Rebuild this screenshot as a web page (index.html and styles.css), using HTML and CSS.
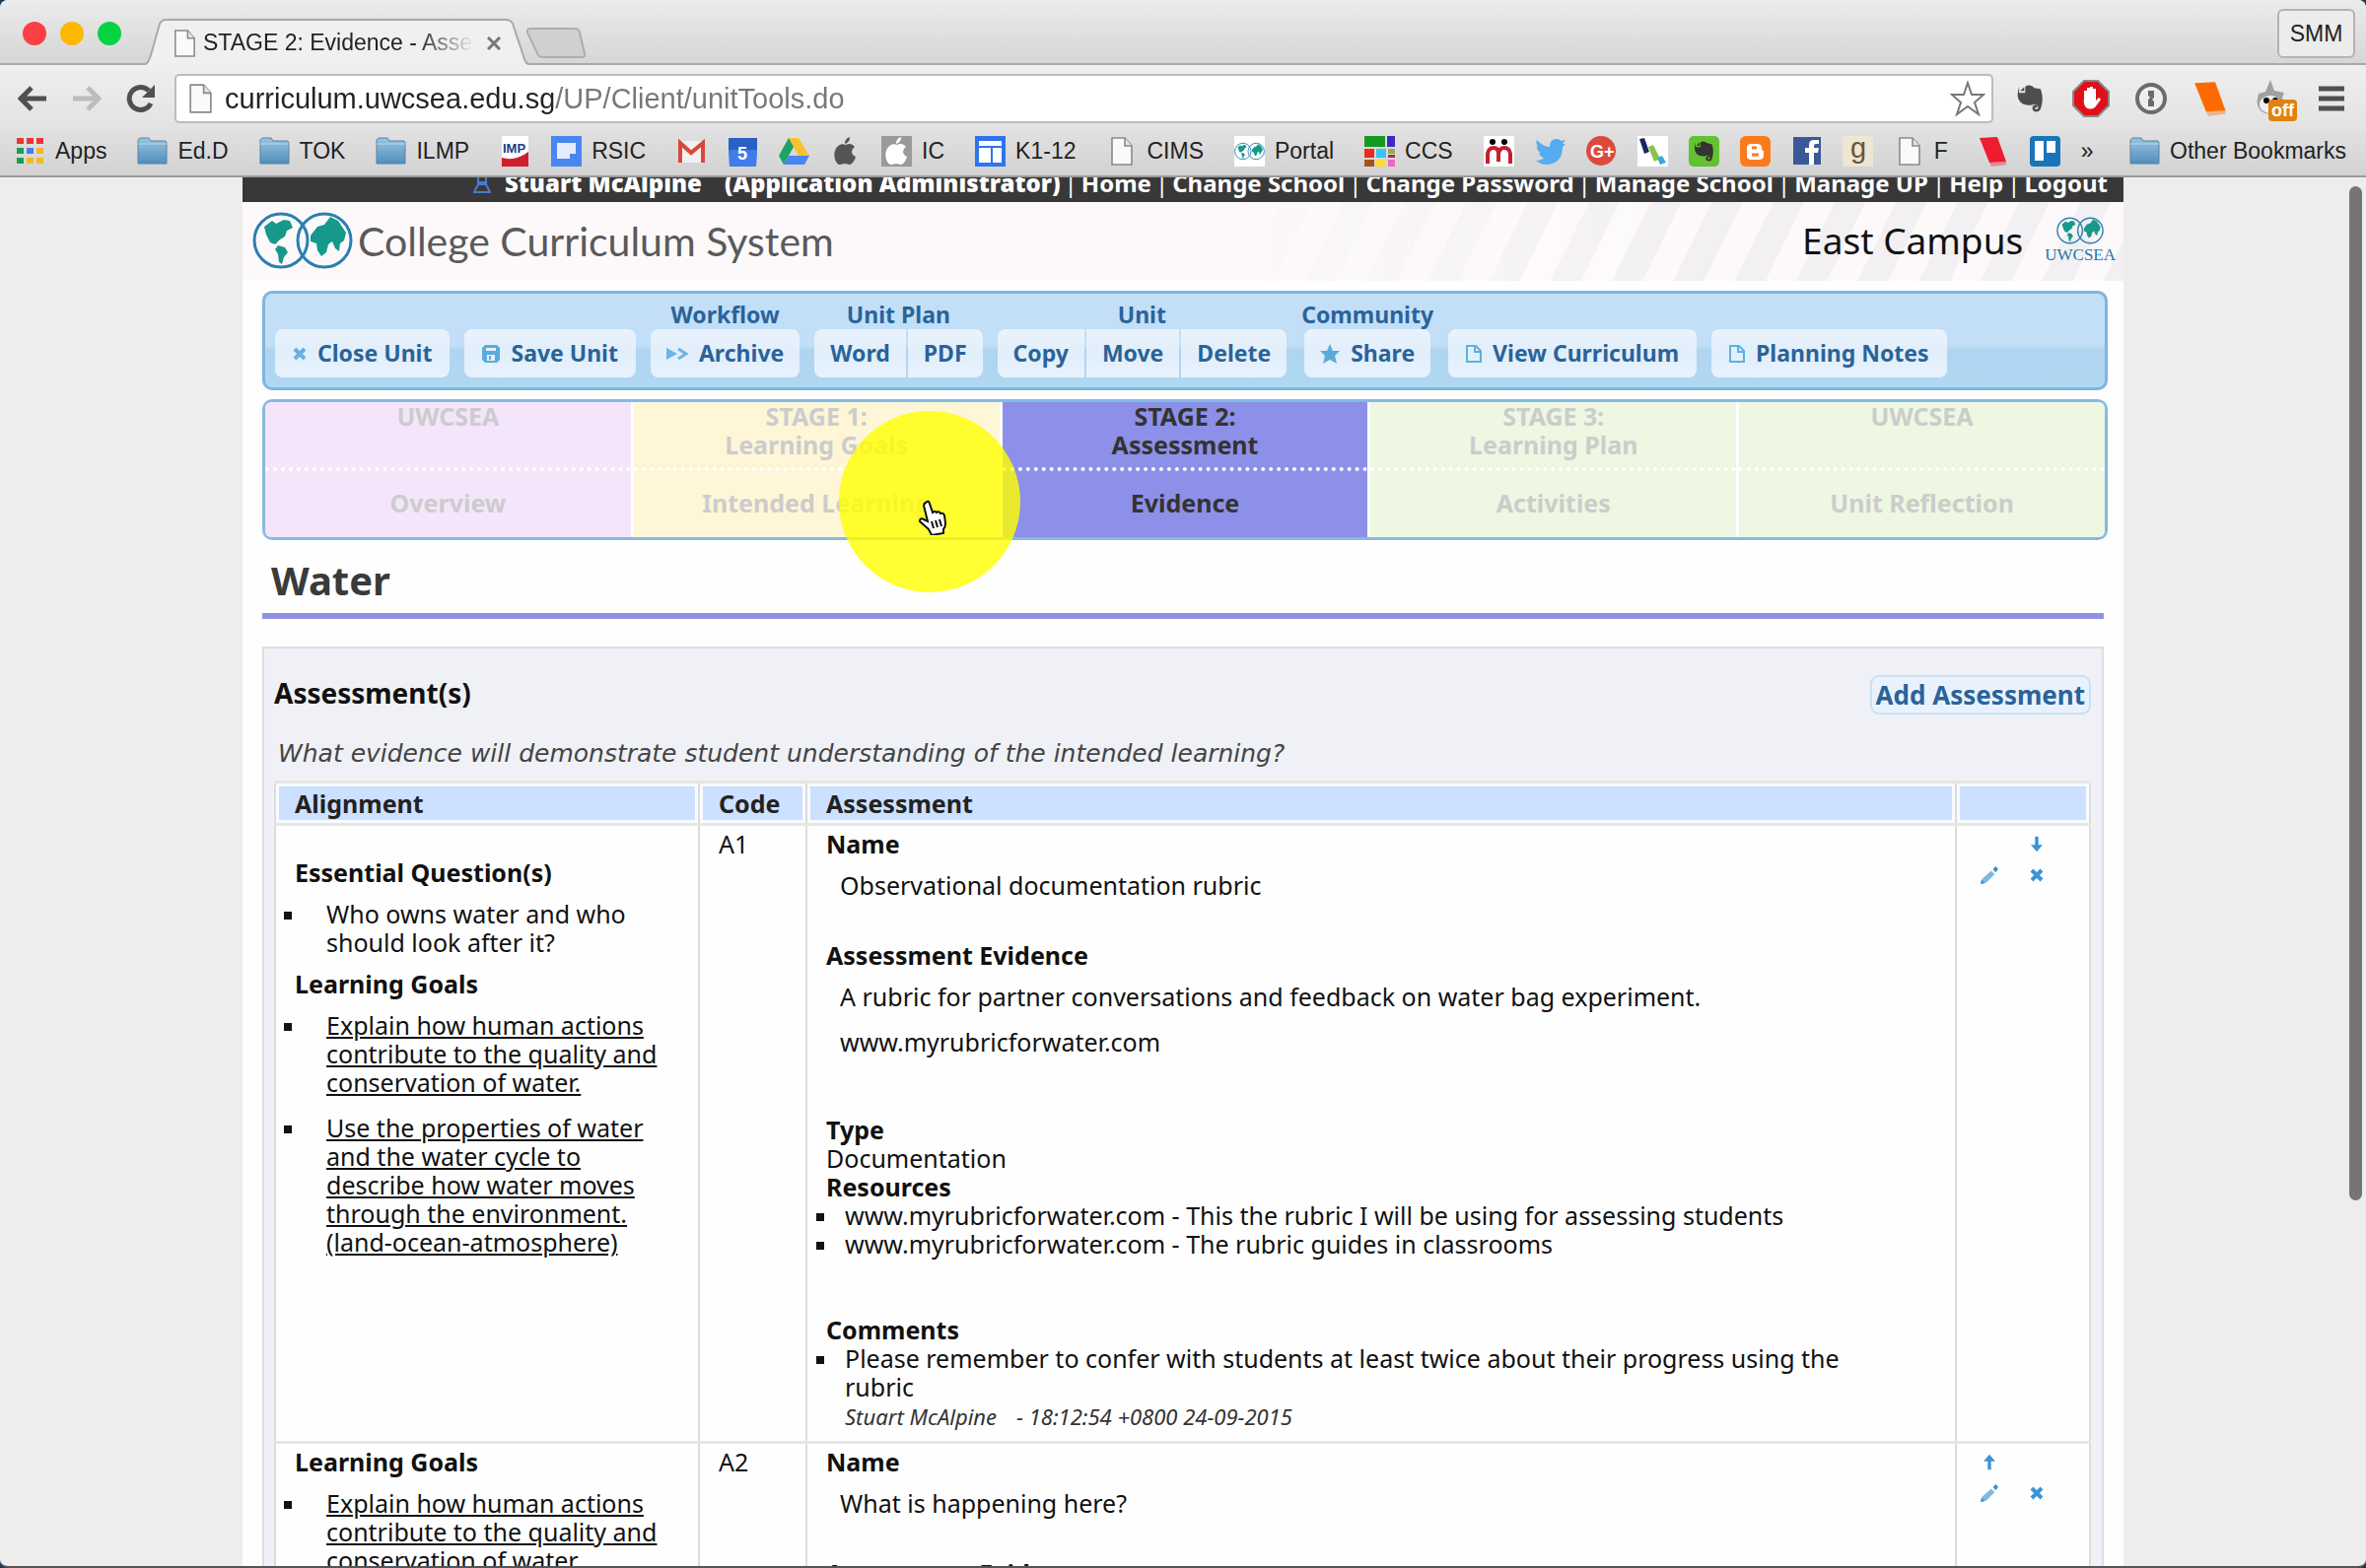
FILE: index.html
```html
<!DOCTYPE html>
<html lang="en">
<head>
  <meta charset="UTF-8" />
  <meta name="viewport" content="width=device-width, initial-scale=1.0"/>
  <title>STAGE 2: Evidence - Assessment</title>
  <link rel="stylesheet" href="styles.css">
</head>
<body>
  <!-- shared icons -->
  <svg class="defs" width="0" height="0" aria-hidden="true">
    <linearGradient id="folderFill" x1="0" y1="0" x2="0" y2="1">
      <stop offset="0" stop-color="#9cc4de"/><stop offset="1" stop-color="#4f8fbd"/>
    </linearGradient>
    <symbol id="folder" viewBox="0 0 31 31">
      <path d="M1 28V4l2-2h9l2 3h15l1 2v21z" fill="url(#folderFill)" stroke="#5583a3"/>
      <path d="M1 8h29" stroke="#b9d8ea"/>
    </symbol>
    <symbol id="page" viewBox="0 0 31 31">
      <path d="M6 2h13l7 8v19H6z" fill="#fafafa" stroke="#8a8a8a" stroke-width="1.6"/>
      <path d="M19 2v8h7" fill="#e6e6e6" stroke="#8a8a8a" stroke-width="1.6"/>
    </symbol>
    <symbol id="globes" viewBox="0 0 102 60">
      <g fill="#16998a">
        <path d="M12 16l8-6 4 3 8-4 6 1 3 7-6 3-2 6-5 3-5 5-5-2-4-8zM26 35l7 2 3 5-4 5-2 7-3-2-1-8-3-5z"/>
        <path d="M59 25l7-9 7-2 6-8 8 4 8 12-2 8-4 3-1 8-4-3-3-7-4 3-2 8-5 4-4-6-1-7-6-2z"/>
      </g>
      <g fill="none" stroke="#2b80b0" stroke-width="3">
        <circle cx="29" cy="30" r="27"/><circle cx="73" cy="30" r="27"/>
      </g>
    </symbol>
    <symbol id="apple" viewBox="0 0 31 31">
      <path d="M16 9c3-2 7-1 9 2-4 3-4 8 1 10-1 4-4 8-6 8-2 0-3-1-5-1s-3 1-5 1C6 29 3 21 5 15c2-6 7-8 11-6zM15 8c0-4 2-6 5-7 0 4-2 6-5 7z"/>
    </symbol>
    <symbol id="elephant" viewBox="0 0 31 31">
      <path d="M4 10h6V4c3-3 7-1 9 1l6 1c3 7 2 15 0 20-2 4-8 3-8-1 0-3 3-4 5-3v2c-3 0-3 2-1 2 3 0 2-5-1-5-3 0-3 1-5 1-5 0-10-1-12-7-1-3 0-8 1-11zM5 8l4-4v4z"/>
    </symbol>
    <symbol id="book" viewBox="0 0 31 31">
      <path d="M1 2l18-1 9 25-17 1z"/><path d="M11 27l17-1v3l-15 2z" opacity=".4"/>
    </symbol>
    <symbol id="cross" viewBox="0 0 14 14"><path d="M2 2l10 10M12 2L2 12" fill="none" stroke="currentColor" stroke-width="4"/></symbol>
    <symbol id="down" viewBox="0 0 14 20"><path d="M5 1h4v10h5l-7 8-7-8h5z" fill="currentColor"/></symbol>
    <symbol id="up" viewBox="0 0 14 20"><path d="M5 19h4V9h5L7 1 0 9h5z" fill="currentColor"/></symbol>
    <symbol id="pencil" viewBox="0 0 20 20">
      <path d="M2 14L12 5l4 4-9 9-6 2z" fill="#7fb9e3"/><path d="M14 3l3-3 3 3-3 4zM1 15l4 4-5 1z" fill="#3c8fd4"/>
    </symbol>
    <symbol id="doc" viewBox="0 0 16 18"><path d="M1 1h9l5 5v11H1zM9 1v6h6" fill="none" stroke="#5fb0de" stroke-width="2"/></symbol>
  </svg>

  <div class="chrome">
    <div class="tab-strip">
      <div class="lights"><i class="red"></i><i class="amber"></i><i class="green"></i></div>
      <div class="tab">
        <svg class="tab-shape" viewBox="0 0 393 47" preserveAspectRatio="none">
          <path d="M0 47C5 46 6 42 8 37L17 5Q19 1 24 1H368Q373 1 375 5L386 38Q388 46 393 47" fill="#f0f0f0" stroke="#a9a9a9" stroke-width="2"/>
        </svg>
        <svg class="tab-icon"><use href="#page"/></svg>
        <span class="tab-title">STAGE 2: Evidence - Assessment</span>
        <button class="tab-close" aria-label="Close tab"><svg width="14" height="14" viewBox="0 0 14 14"><path d="M1 1l12 12M13 1L1 13" stroke="#777" stroke-width="3"/></svg></button>
      </div>
      <button class="new-tab" aria-label="New tab">
        <svg width="60" height="31" viewBox="0 0 60 31"><path d="M4 1h45q4 0 5 4l5 21q1 4-3 4H17q-5 0-6-4L1 5q-1-4 3-4z" fill="#d0d0d0" stroke="#adadad" stroke-width="2"/></svg>
      </button>
      <button class="profile">SMM</button>
    </div>

    <div class="toolbar">
      <button class="nav-btn" aria-label="Back"><svg width="30" height="26" viewBox="0 0 30 26"><path d="M29 13H5M14 2L3 13l11 11" fill="none" stroke="#505050" stroke-width="5"/></svg></button>
      <button class="nav-btn" aria-label="Forward"><svg width="30" height="26" viewBox="0 0 30 26"><path d="M1 13h24M16 2l11 11-11 11" fill="none" stroke="#bcbcbc" stroke-width="5"/></svg></button>
      <button class="nav-btn" aria-label="Reload"><svg width="30" height="30" viewBox="0 0 30 30"><path d="M25 20a11.500 11.500 0 1 1-2-13" fill="none" stroke="#505050" stroke-width="5"/><path d="M29 1v13H16z" fill="#505050"/></svg></button>
      <div class="address">
        <svg class="site-icon"><use href="#page"/></svg>
        <input class="url" type="text" aria-label="Address" value="curriculum.uwcsea.edu.sg/UP/Client/unitTools.do">
        <button class="star" aria-label="Bookmark this page"><svg width="36" height="36" viewBox="0 0 36 36"><path d="M18 2l4 12h12l-9 8 4 12-11-8-11 8 4-12-9-8h12z" fill="#fff" stroke="#777" stroke-width="2"/></svg></button>
      </div>
      <div class="extensions">
        <button aria-label="Evernote"><svg width="32" height="32" fill="#4d4d4d"><use href="#elephant"/></svg></button>
        <button aria-label="AdBlock"><svg width="38" height="38" viewBox="0 0 38 38"><path d="M12 1h14l11 11v14L26 37H12L1 26V12z" fill="#e0101a" stroke="#888" stroke-width="2"/><path d="M12 19V11h3v6V8h3v8V7h3v9V9h3v12l3-3 2 2-6 8q-5 3-9 0-3-3-2-9z" fill="#fff"/></svg></button>
        <button aria-label="Password manager"><svg width="34" height="34" viewBox="0 0 34 34"><circle cx="17" cy="17" r="14" fill="#eee" stroke="#6b6b6b" stroke-width="4"/><path d="M14 9h6v7l-2 2 2 2v5h-6v-7l2-2-2-2z" fill="#6b6b6b"/></svg></button>
        <button aria-label="Reader"><svg width="36" height="36" fill="#ff6a00"><use href="#book"/></svg></button>
        <button class="cat" aria-label="Greasemonkey"><svg width="34" height="38" viewBox="0 0 34 38"><path d="M4 14l7-2 5-12 4 11 10 2-2 5q4 8-2 13-9 8-19 1-6-6-4-13z" fill="#a0a0a0"/><ellipse cx="16" cy="25" rx="11" ry="9" fill="#eee"/><circle cx="12" cy="21" r="3"/><circle cx="21" cy="21" r="3"/></svg><span class="off">off</span></button>
        <button aria-label="Menu"><svg width="26" height="26" viewBox="0 0 26 26"><path d="M0 3h26M0 13h26M0 23h26" stroke="#505050" stroke-width="5"/></svg></button>
      </div>
    </div>

    <nav class="bookmarks">
      <a href="#"><svg viewBox="0 0 31 31"><g fill="#e33"><path d="M2 2h7v6H2zM12 2h7v6h-7z"/><path d="M22 2h7v6h-7z"/></g><path d="M2 12h7v6H2zM2 22h7v6H2z" fill="#1a9f53"/><path d="M12 12h7v6h-7z" fill="#3d82f0"/><path d="M22 12h7v6h-7zM12 22h7v6h-7zM22 22h7v6h-7z" fill="#f5b81f"/></svg><span>Apps</span></a>
      <a href="#"><svg><use href="#folder"/></svg><span>Ed.D</span></a>
      <a href="#"><svg><use href="#folder"/></svg><span>TOK</span></a>
      <a href="#"><svg><use href="#folder"/></svg><span>ILMP</span></a>
      <a href="#" aria-label="IMP"><svg viewBox="0 0 31 31"><path d="M2 0h27v31H2z" fill="#fff"/><path d="M2 22q14 4 27-6v15H2z" fill="#cf1f2c"/><text x="3" y="17" class="ico-imp">IMP</text></svg></a>
      <a href="#"><svg viewBox="0 0 31 31"><path d="M0 0h31v31H0z" fill="#4a86f0"/><path d="M6 7h19v11h-6v5H6z" fill="#e3ecfd"/></svg><span>RSIC</span></a>
      <a href="#" aria-label="Gmail"><svg viewBox="0 0 31 31"><path d="M2 5h27v22H2z" fill="#f2f0f0"/><path d="M4 27V7l11 10L27 7v20" fill="none" stroke="#d8483c" stroke-width="4"/></svg></a>
      <a href="#" aria-label="Calendar"><svg viewBox="0 0 31 31"><path d="M1 2h29v15l-1 14H2L1 17z" fill="#3f7de8"/><path d="M1 2h29v12H1z" fill="#2a5fc4"/><text x="10" y="24" class="ico-day">5</text></svg></a>
      <a href="#" aria-label="Drive"><svg viewBox="0 0 31 31"><path d="M10 2h10l11 18H20z" fill="#fbc02d"/><path d="M10 2l5 9L5 29l-5-9z" fill="#1da362"/><path d="M10 20h21l-5 9H5z" fill="#4a86f0"/></svg></a>
      <a href="#" aria-label="Apple"><svg fill="#555"><use href="#apple"/></svg></a>
      <a href="#"><svg class="ico-grey" fill="#fff"><use href="#apple"/></svg><span>IC</span></a>
      <a href="#"><svg viewBox="0 0 31 31"><path d="M0 0h31v31H0z" fill="#2f74ee"/><path d="M4 5h23v5H4zM4 12h12v15H4zM18 12h9v15h-9z" fill="#fff"/></svg><span>K1-12</span></a>
      <a href="#"><svg><use href="#page"/></svg><span>CIMS</span></a>
      <a href="#"><svg class="ico-white"><use href="#globes"/></svg><span>Portal</span></a>
      <a href="#"><svg viewBox="0 0 31 31"><path d="M0 0h21v11H0z" fill="#159a20"/><path d="M23 0h8v11h-8z" fill="#3a28c8"/><path d="M0 13h10v9H0z" fill="#f0291b"/><path d="M12 13h10v9H12z" fill="#36c5f4"/><path d="M24 13h7v5h-7z" fill="#8db04c"/><path d="M24 19h7v3h-7z" fill="#b52b4b"/><path d="M0 24h10v7H0z" fill="#a4541a"/><path d="M12 24h10v7H12z" fill="#fbdc34"/><path d="M24 24h7v7h-7z" fill="#e66ac2"/></svg><span>CCS</span></a>
      <a href="#" aria-label="Mendeley"><svg class="ico-white" viewBox="0 0 31 31"><circle cx="9" cy="6" r="3"/><circle cx="21" cy="6" r="3"/><path d="M4 28V18q1-6 6-6t5 6v8-8q1-6 6-6t6 6v10" fill="none" stroke="#c3202f" stroke-width="4"/></svg></a>
      <a href="#" aria-label="Twitter"><svg viewBox="0 0 31 31"><path d="M2 4q6 7 13 7 0-8 7-8 3 0 5 2l4-1-3 4 3 0-3 3q0 17-16 18-6 0-11-4 6 0 8-3-4-1-5-5h2Q1 14 2 10l2 1Q0 8 2 4z" fill="#55acee"/></svg></a>
      <a href="#" aria-label="Google Plus"><svg viewBox="0 0 31 31"><circle cx="15" cy="15" r="15" fill="#dc4a3e"/><text x="4" y="22" class="ico-gplus">G+</text></svg></a>
      <a href="#" aria-label="Diigo"><svg class="ico-white" viewBox="0 0 31 31"><path d="M2 3l5-1 5 14-5 2z" fill="#1d2560"/><path d="M11 11l5-2 7 14-6 3z" fill="#8bc34a"/><path d="M20 22l5-2 4 7-6 2z" fill="#3fa9dc"/></svg></a>
      <a href="#" aria-label="Evernote"><svg viewBox="0 0 31 31"><rect width="31" height="31" rx="5" fill="#63c22f"/><use href="#elephant" x="4" y="3" width="24" height="25" fill="#333"/></svg></a>
      <a href="#" aria-label="Blogger"><svg viewBox="0 0 31 31"><rect width="31" height="31" rx="6" fill="#fb7a1e"/><path d="M11 8h6q5 0 5 4 0 3 2 3v5q0 4-5 4h-8q-4 0-4-4v-8q0-4 4-4z" fill="#fff"/><path d="M12 12h5M12 19h7" stroke="#fb7a1e" stroke-width="3"/></svg></a>
      <a href="#" aria-label="Facebook"><svg viewBox="0 0 31 31"><path d="M2 1h28v28H2z" fill="#3b5998"/><path d="M18 29V17h-4v-5h4V9q0-5 5-5h5v4h-3q-2 0-2 2v2h5l-1 5h-4v12z" fill="#fff"/></svg></a>
      <a href="#" aria-label="Goodreads"><svg viewBox="0 0 31 31"><path d="M0 0h31v31H0z" fill="#ece6d2"/><text x="8" y="22" class="ico-g">g</text></svg></a>
      <a href="#"><svg><use href="#page"/></svg><span>F</span></a>
      <a href="#" aria-label="Flipboard"><svg fill="#ee1c2e"><use href="#book"/></svg></a>
      <a href="#" aria-label="Trello"><svg viewBox="0 0 31 31"><rect width="31" height="31" rx="4" fill="#1a75b8"/><path d="M5 5h9v20H5zM17 5h9v12h-9z" fill="#fff"/></svg></a>
      <button class="more" aria-label="More bookmarks">»</button>
      <a href="#" class="other"><svg><use href="#folder"/></svg><span>Other Bookmarks</span></a>
    </nav>
  </div>

  <div class="viewport">
    <div class="container">
      <div class="user-bar">
        <svg width="18" height="22" viewBox="0 0 18 22"><path d="M5 3h8v7H5zM1 20l4-8h8l4 8z" fill="none" stroke="#4a7ad0" stroke-width="2"/></svg>
        <b class="user">Stuart McAlpine</b>
        <b>(Application Administrator)</b>
        <i>|</i><a href="#">Home</a><i>|</i><a href="#">Change School</a><i>|</i><a href="#">Change Password</a><i>|</i><a href="#">Manage School</a><i>|</i><a href="#">Manage UP</a><i>|</i><a href="#">Help</a><i>|</i><a href="#">Logout</a>
      </div>

      <header>
        <svg class="logo"><use href="#globes"/></svg>
        <span class="site-name">College Curriculum System</span>
        <span class="campus">East Campus</span>
        <div class="school"><svg><use href="#globes"/></svg><span>UWCSEA</span></div>
      </header>

      <main>
        <div class="actions">
          <div class="group"><button><svg width="14" height="14" class="pale"><use href="#cross"/></svg>Close Unit</button></div>
          <div class="group"><button><svg width="18" height="18" viewBox="0 0 18 18"><path d="M3 0h12l3 3v12l-3 3H3l-3-3V3z" fill="#5ea9dc"/><path d="M4 3h10v3H4zM5 10h8v6H5z" fill="#e4f1fb"/><path d="M7 11h2v4H7z" fill="#5ea9dc"/></svg>Save Unit</button></div>
          <div class="group"><span>Workflow</span><div class="buttons"><button><svg width="22" height="14" viewBox="0 0 22 14"><path d="M0 1l11 6-11 6z" fill="#6db4e2"/><path d="M12 2l8 5-8 5" fill="none" stroke="#6db4e2" stroke-width="3"/></svg>Archive</button></div></div>
          <div class="group"><span>Unit Plan</span><div class="buttons"><button>Word</button><button>PDF</button></div></div>
          <div class="group"><span>Unit</span><div class="buttons"><button>Copy</button><button>Move</button><button>Delete</button></div></div>
          <div class="group"><span>Community</span><div class="buttons"><button><svg width="20" height="20" viewBox="0 0 20 20"><path d="M10 0l3 7h7l-5 5 2 8-7-4-7 4 2-8-5-5h7z" fill="#5ea9dc"/></svg>Share</button></div></div>
          <div class="group"><button><svg width="16" height="18"><use href="#doc"/></svg>View Curriculum</button></div>
          <div class="group"><button><svg width="16" height="18"><use href="#doc"/></svg>Planning Notes</button></div>
        </div>

        <nav class="stages">
          <a href="#" class="stage overview"><span class="top">UWCSEA</span><span class="sub">Overview</span></a>
          <a href="#" class="stage goals"><span class="top">STAGE 1:<br>Learning Goals</span><span class="sub">Intended Learning</span></a>
          <a href="#" class="stage evidence"><span class="top">STAGE 2:<br>Assessment</span><span class="sub">Evidence</span></a>
          <a href="#" class="stage plan"><span class="top">STAGE 3:<br>Learning Plan</span><span class="sub">Activities</span></a>
          <a href="#" class="stage plan"><span class="top">UWCSEA</span><span class="sub">Unit Reflection</span></a>
          <div class="pointer">
            <svg width="30" height="36" viewBox="0 0 30 36"><path d="M8 3q3-3 4 1l3 9q2-2 4 0 2-2 4 1 3-1 4 2l1 8q0 4-2 6v4l-12 2-3-6-9-8q0-4 4-2l4 2L6 6q0-2 2-3z" fill="#fff" stroke="#111" stroke-width="2"/><path d="M14 22l2 7M18 21l2 7M22 20l2 7" stroke="#111" stroke-width="2"/></svg>
          </div>
        </nav>

        <h1>Water</h1>

        <section class="panel">
          <div class="panel-head">
            <h2>Assessment(s)</h2>
            <button class="add">Add Assessment</button>
          </div>
          <p class="hint">What evidence will demonstrate student understanding of the intended learning?</p>
          <table>
            <colgroup><col class="c-align"><col class="c-code"><col><col class="c-tools"></colgroup>
            <thead>
              <tr><th>Alignment</th><th>Code</th><th>Assessment</th><th></th></tr>
            </thead>
            <tbody>
              <tr>
                <td class="align">
                  <br>
                  <h3>Essential Question(s)</h3>
                  <ul>
                    <li><span>Who owns water and who should look after it?</span></li>
                  </ul>
                  <h3>Learning Goals</h3>
                  <ul>
                    <li><a href="#">Explain how human actions contribute to the quality and conservation of water.</a></li>
                    <li><a href="#">Use the properties of water and the water cycle to describe how water moves through the environment. (land-ocean-atmosphere)</a></li>
                  </ul>
                </td>
                <td>A1</td>
                <td class="detail">
                  <h3>Name</h3>
                  <div class="text"><p>Observational documentation rubric</p></div>
                  <h3>Assessment Evidence</h3>
                  <div class="text evidence-text">
                    <p>A rubric for partner conversations and feedback on water bag experiment.</p>
                    <p>www.myrubricforwater.com</p>
                  </div>
                  <h3>Type</h3>
                  <div>Documentation</div>
                  <h3>Resources</h3>
                  <ul>
                    <li><span>www.myrubricforwater.com - This the rubric I will be using for assessing students</span></li>
                    <li><span>www.myrubricforwater.com - The rubric guides in classrooms</span></li>
                  </ul>
                  <h3 class="comments">Comments</h3>
                  <ul>
                    <li><span>Please remember to confer with students at least twice about their progress using the rubric</span></li>
                  </ul>
                  <p class="signed"><span>Stuart McAlpine</span><span>- 18:12:54 +0800 24-09-2015</span></p>
                </td>
                <td class="tools">
                  <div class="tool-grid">
                    <button class="right" aria-label="Move down"><svg width="12" height="17"><use href="#down"/></svg></button>
                    <button aria-label="Edit"><svg width="18" height="18"><use href="#pencil"/></svg></button>
                    <button aria-label="Delete"><svg width="14" height="14"><use href="#cross"/></svg></button>
                  </div>
                </td>
              </tr>
              <tr>
                <td class="align">
                  <h3>Learning Goals</h3>
                  <ul>
                    <li><a href="#">Explain how human actions contribute to the quality and conservation of water.</a></li>
                  </ul>
                </td>
                <td>A2</td>
                <td class="detail">
                  <h3>Name</h3>
                  <div class="text"><p>What is happening here?</p></div>
                  <h3>Assessment Evidence</h3>
                </td>
                <td class="tools">
                  <div class="tool-grid">
                    <button class="left" aria-label="Move up"><svg width="12" height="17"><use href="#up"/></svg></button>
                    <button aria-label="Edit"><svg width="18" height="18"><use href="#pencil"/></svg></button>
                    <button aria-label="Delete"><svg width="14" height="14"><use href="#cross"/></svg></button>
                  </div>
                </td>
              </tr>
            </tbody>
          </table>
        </section>
      </main>
    </div>
    <div class="scroll-thumb"></div>
  </div>
</body>
</html>
```
FILE: styles.css
```css
* { box-sizing: border-box; }
html { background: #1d3a55; }
body {
  margin: 0;
  height: 100vh;
  display: flex;
  flex-direction: column;
  overflow: hidden;
  background: #ededed;
  border-bottom: 2px solid #555;
  border-radius: 8px;
  font-family: "Noto Sans", sans-serif;
  font-size: 25px;
  line-height: 29px;
  color: #111;
}
button { font: inherit; color: inherit; background: none; border: none; padding: 0; margin: 0; cursor: pointer; }
a { color: inherit; text-decoration: none; }
svg { display: block; flex: none; }
.defs { position: absolute; }
h1, h2, h3, p, ul { margin: 0; padding: 0; }

/* browser window */
.chrome { flex: none; font-family: "Liberation Sans", Arial, sans-serif; color: #222; border-bottom: 2px solid #9a9a9a; }
.tab-strip {
  display: flex;
  height: 66px;
  padding: 0 11px 0 23px;
  background: linear-gradient(#ebebeb, #d6d6d6);
  border-bottom: 2px solid #a9a9a9;
}
.lights { display: flex; gap: 14px; padding-top: 22px; }
.lights i { width: 24px; height: 24px; border-radius: 50%; }
.red { background: #fc4044; }
.amber { background: #fdb901; }
.green { background: #05d341; }
.tab { position: relative; display: flex; align-items: center; width: 393px; height: 47px; margin: 19px 0 0 22px; padding: 2px 30px 0 27px; }
.tab-shape { position: absolute; left: 0; top: 0; width: 100%; height: 100%; }
.tab-icon { position: relative; width: 30px; height: 30px; }
.tab-title {
  position: relative;
  flex: 1;
  margin-left: 4px;
  font-size: 23px;
  white-space: nowrap;
  overflow: hidden;
  -webkit-mask-image: linear-gradient(90deg, #000 78%, transparent);
  mask-image: linear-gradient(90deg, #000 78%, transparent);
}
.tab-close { position: relative; margin-left: 12px; }
.new-tab { align-self: flex-start; margin: 28px auto 0 -4px; }
.profile { width: 79px; height: 50px; margin-top: 9px; border: 2px solid #b3b3b3; border-radius: 6px; background: #ececec; font-size: 23px; }

.toolbar { display: flex; align-items: center; height: 68px; padding: 0 5px; background: linear-gradient(#efefef, #e2e2e2); }
.nav-btn { width: 55px; display: flex; justify-content: center; }
.address {
  flex: 1;
  display: flex;
  align-items: center;
  height: 50px;
  margin: 0 7px;
  padding: 0 6px 0 8px;
  background: #fff;
  border: 2px solid #bcbcbc;
  border-radius: 5px;
}
.site-icon { width: 32px; height: 32px; }
/* host name dark, path grey */
.url {
  flex: 1;
  height: 40px;
  margin-left: 9px;
  padding: 0;
  border: none;
  outline: none;
  font: 29px "Liberation Sans", Arial, sans-serif;
  color: #222;
  background: linear-gradient(90deg, #222 333px, #777 333px);
  -webkit-background-clip: text;
  background-clip: text;
  -webkit-text-fill-color: transparent;
}
.extensions { display: flex; align-items: center; }
.extensions button { position: relative; width: 61px; display: flex; justify-content: center; }
.off { position: absolute; left: 28px; top: 20px; padding: 0 3px; border-radius: 4px; background: #e0820f; color: #fff; font-size: 18px; font-weight: bold; line-height: 22px; }

.bookmarks { display: flex; align-items: center; gap: 21px; height: 44px; padding: 0 20px 5px 15px; background: linear-gradient(#e0e0e0, #d2d2d2); font-size: 23px; }
.bookmarks a { display: flex; align-items: center; }
.bookmarks svg { width: 31px; height: 31px; }
.bookmarks span { margin: 0 10px; white-space: nowrap; }
.bookmarks .other { margin-left: auto; }
.bookmarks .other span { margin-right: 0; }
.ico-white { background: #fff; }
.ico-grey { background: #9a9a9a; }
.ico-imp { font: bold 13px "Liberation Sans", sans-serif; fill: #1c3c80; }
.ico-day { font: bold 18px "Liberation Sans", sans-serif; fill: #fff; }
.ico-gplus { font: bold 18px "Liberation Sans", sans-serif; fill: #fff; }
.ico-g { font: 29px "Liberation Sans", sans-serif; fill: #6e5238; }

/* page */
.viewport { position: relative; flex: 1; min-height: 0; overflow: hidden; }
.scroll-thumb { position: absolute; top: 9px; right: 4px; width: 13px; height: 73%; border-radius: 7px; background: #757575; }
.container { width: 79.5%; margin: -12px auto 0; background: #fefefe; }
.user-bar {
  display: flex;
  justify-content: flex-end;
  align-items: center;
  height: 37px;
  padding: 0 16px 2px;
  background: #383838;
  color: #fff;
  font-size: 24px;
  font-weight: bold;
  white-space: nowrap;
}
.user { margin: 0 23px 0 14px; }
.user-bar i { font-style: normal; font-weight: normal; margin: 0 4px; }

header {
  position: relative;
  display: flex;
  align-items: center;
  height: 80px;
  padding: 0 8px 2px 10px;
  background: #fdf9fb;
}
header::before {
  content: "";
  position: absolute;
  right: 0;
  top: 0;
  bottom: 0;
  width: 48%;
  background: repeating-linear-gradient(116deg, #f2f0f2 0 28px, #fdf9fb 28px 56px);
  -webkit-mask-image: linear-gradient(90deg, transparent, #000 50%);
  mask-image: linear-gradient(90deg, transparent, #000 50%);
}
header > * { position: relative; }
.logo { width: 102px; height: 60px; }
.site-name { flex: 1; margin-left: 5px; font-family: Lato, sans-serif; font-size: 41px; color: #5a5a5a; }
.campus { font-size: 37px; line-height: 44px; }
.school { margin-left: 22px; display: flex; flex-direction: column; align-items: center; }
.school svg { width: 48px; height: 30px; }
.school span { font: 17px/20px "Liberation Serif", serif; color: #2476a8; }

main { padding: 10px 16px 0 20px; }
.actions {
  display: flex;
  align-items: flex-end;
  gap: 15px;
  height: 101px;
  padding: 0 10px 10px;
  border: 3px solid #80b5dd;
  border-radius: 10px;
  background: linear-gradient(#c2dff7 55%, #b0d4f1 60%, #b0d8f3);
  color: #2a639a;
  font-size: 23px;
  font-weight: bold;
}
.group { display: flex; flex-direction: column; align-items: center; }
.buttons { display: flex; gap: 2px; }
.group button { display: flex; align-items: center; gap: 11px; height: 49px; padding: 0 18px; background: linear-gradient(#eaf2fc, #e0effb 50%, #e9f2fd); border-radius: 8px; font-weight: bold; }
.group .buttons button { padding: 0 16px; }
.buttons button:not(:first-child) { border-top-left-radius: 0; border-bottom-left-radius: 0; }
.buttons button:not(:last-child) { border-top-right-radius: 0; border-bottom-right-radius: 0; }
.pale { color: #69b0df; }

.stages {
  position: relative;
  display: grid;
  grid-template-columns: repeat(5, 1fr);
  gap: 3px;
  margin-top: 9px;
  border: 3px solid #85bbdf;
  border-radius: 10px;
  text-align: center;
  font-weight: bold;
}
.stage { display: flex; flex-direction: column; color: #ccc; }
.stage:first-child { border-radius: 6px 0 0 6px; }
.stage:nth-child(5) { border-radius: 0 6px 6px 0; }
.top { height: 70px; border-bottom: 4px dotted #fff; }
.sub { height: 67px; padding-top: 18px; }
.overview { background: #f4e5fb; }
.goals { background: #fef6d6; }
.evidence { background: #8d90e8; color: #333; }
.plan { background: #edf7e1; }
.pointer { position: absolute; left: 582px; top: 9px; width: 184px; height: 184px; border-radius: 50%; background: rgba(255, 255, 0, .8); pointer-events: none; }
.pointer svg { margin: 90px 0 0 80px; }

h1 { margin: 14px 4px 0 0; padding: 1px 9px 8px; border-bottom: 6px solid #8f90e6; font-size: 40px; line-height: 51px; color: #3a3a3a; }

.panel { margin: 28px 4px 0 0; padding: 27px 11px 0 10px; min-height: 1000px; border: 2px solid #dedee2; background: #eff1f6; }
.panel-head { display: flex; justify-content: space-between; align-items: flex-start; height: 40px; }
h2 { font-size: 28px; line-height: 36px; }
.add { height: 40px; padding: 0 4px; border: 2px solid #c9e0f2; border-radius: 9px; background: #e9f2fc; color: #2a639a; font-size: 26px; font-weight: bold; }
.hint { margin: 25px 0 13px; padding-left: 4px; font-family: "DejaVu Sans", sans-serif; font-size: 25px; font-style: italic; color: #444; }

table { width: 100%; table-layout: fixed; border-collapse: collapse; background: #fefefe; }
.c-align { width: 430px; }
.c-code { width: 109px; }
.c-tools { width: 136px; }
th, td { border: 2px solid #dcdcdc; border-top: 3px solid #e6e6e4; text-align: left; vertical-align: top; }
th { height: 43px; padding: 0 19px; background: #cce0ff; box-shadow: inset 0 0 0 3px #f8fbff; color: #222; vertical-align: middle; }
td { padding: 4px 19px 10px; }
h3 { font-size: 25px; line-height: 29px; }
ul { list-style: none; }
li { display: flex; }
li::before { content: ""; flex: none; width: 8px; height: 8px; margin-top: 12px; background: #111; }
.align ul { margin: 13px 0 13px -11px; }
.align li { margin-bottom: 17px; }
.align li:last-child { margin-bottom: 0; }
.align li::before { margin-right: 35px; }
.align a { text-decoration: underline; }
.detail ul { margin-left: -10px; padding-right: 60px; }
.detail li::before { margin-right: 21px; }
.text { margin: 13px 0 42px 14px; }
.text p + p { margin-top: 17px; }
.evidence-text { margin-bottom: 60px; }
.comments { margin-top: 58px; }
.signed { display: flex; gap: 20px; margin: 1px 0 0 19px; font-size: 22px; font-style: italic; color: #333; }
td.tools { padding: 3px 0 0 9px; }
.tool-grid { display: grid; grid-template-columns: 48px 48px; grid-auto-rows: 31px; color: #3c93d6; }
.tool-grid button { display: grid; place-items: center; }
.tool-grid .right { grid-column: 2; }
.tool-grid .left { grid-column: 1; }
.tool-grid .left + button { grid-column: 1; }
```
